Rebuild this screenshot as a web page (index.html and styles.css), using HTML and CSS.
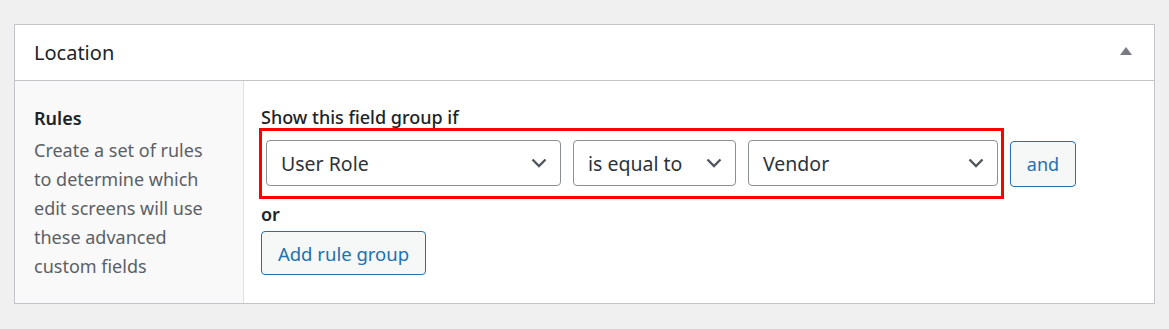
FILE: index.html
```
<!DOCTYPE html>
<html lang="en">
<head>
  <meta charset="UTF-8">
  <title>Location</title>
  <link rel="stylesheet" href="styles.css">
</head>
<body>
  <div class="postbox">
    <div class="postbox-header">
      <h2>Location</h2>
      <span class="toggle"></span>
    </div>
    <div class="field-row">
      <div class="field-label">
        <label>Rules</label>
        <p>Create a set of rules to determine which edit screens will use these advanced custom fields</p>
      </div>
      <div class="field-input">
        <h4>Show this field group if</h4>
        <div class="rule-line">
          <div class="rule-box">
            <div class="select param">
              <span>User Role</span>
              <svg width="16" height="10" viewBox="0 0 16 10"><path d="M1.5 1.5 L8 8 L14.5 1.5" fill="none" stroke="#50575e" stroke-width="2.4"/></svg>
            </div>
            <div class="select operator">
              <span>is equal to</span>
              <svg width="16" height="10" viewBox="0 0 16 10"><path d="M1.5 1.5 L8 8 L14.5 1.5" fill="none" stroke="#50575e" stroke-width="2.4"/></svg>
            </div>
            <div class="select value">
              <span>Vendor</span>
              <svg width="16" height="10" viewBox="0 0 16 10"><path d="M1.5 1.5 L8 8 L14.5 1.5" fill="none" stroke="#50575e" stroke-width="2.4"/></svg>
            </div>
          </div>
          <button type="button" class="btn btn-and">and</button>
        </div>
        <h4 class="or">or</h4>
        <button type="button" class="btn btn-group">Add rule group</button>
      </div>
    </div>
  </div>
</body>
</html>
```

FILE: styles.css
```
body {
  font-family: "Noto Sans", "Open Sans", sans-serif;
  background-color: #f0f0f1;
  margin: 0;
  padding: 24px 0 0 14px;
  color: #1d2327;
}

.postbox {
  width: 1139px;
  background: #fff;
  border: 1px solid #c3c4c7;
}

.postbox-header {
  display: flex;
  align-items: center;
  justify-content: space-between;
  height: 55px;
  padding: 0 22px 0 19px;
  border-bottom: 1px solid #c3c4c7;
}

.postbox-header h2 {
  margin: 0;
  font-size: 20px;
  font-weight: 400;
}

.toggle {
  width: 0;
  height: 0;
  border-left: 6px solid transparent;
  border-right: 6px solid transparent;
  border-bottom: 8px solid #787c82;
  margin-top: -4px;
}

.field-row {
  display: grid;
  grid-template-columns: 229px 1fr;
  height: 222px;
}

.field-label {
  background: #f9f9f9;
  border-right: 1px solid #e1e1e1;
  padding: 24px 22px 0 19px;
}

.field-label label {
  display: block;
  font-size: 18px;
  font-weight: 600;
  line-height: 26px;
}

.field-label p {
  margin: 5px 0 0;
  font-size: 18px;
  line-height: 29px;
  color: #5a6066;
}

.field-input {
  padding: 24px 0 0 17px;
}

.field-input h4 {
  margin: 0;
  font-size: 18px;
  font-weight: 500;
  line-height: 24px;
}

.rule-line {
  display: flex;
  align-items: center;
  margin-left: -2px;
  margin-top: -1px;
}

.rule-box {
  display: flex;
  gap: 12px;
  border: 3px solid #f00;
  padding: 9px 3px 10px 4px;
}

.select {
  display: flex;
  align-items: center;
  justify-content: space-between;
  box-sizing: border-box;
  height: 46px;
  padding: 0 13px 0 14px;
  border: 1px solid #8c8f94;
  border-radius: 4px;
  font-size: 19.5px;
  color: #2c3338;
}

.param { width: 295px; }
.operator { width: 163px; }
.value { width: 250px; }

.btn {
  font-family: inherit;
  font-size: 18px;
  color: #2271b1;
  background: #f6f7f7;
  border: 1px solid #2271b1;
  border-radius: 4px;
  cursor: pointer;
}

.btn-and {
  margin-left: 6px;
  height: 46px;
  width: 66px;
  padding: 0;
}

.field-input h4.or {
  margin-top: 3px;
  font-weight: 600;
}

.btn-group {
  margin-top: 5px;
  height: 44px;
  width: 165px;
  padding: 0;
  font-size: 18.5px;
}
```
